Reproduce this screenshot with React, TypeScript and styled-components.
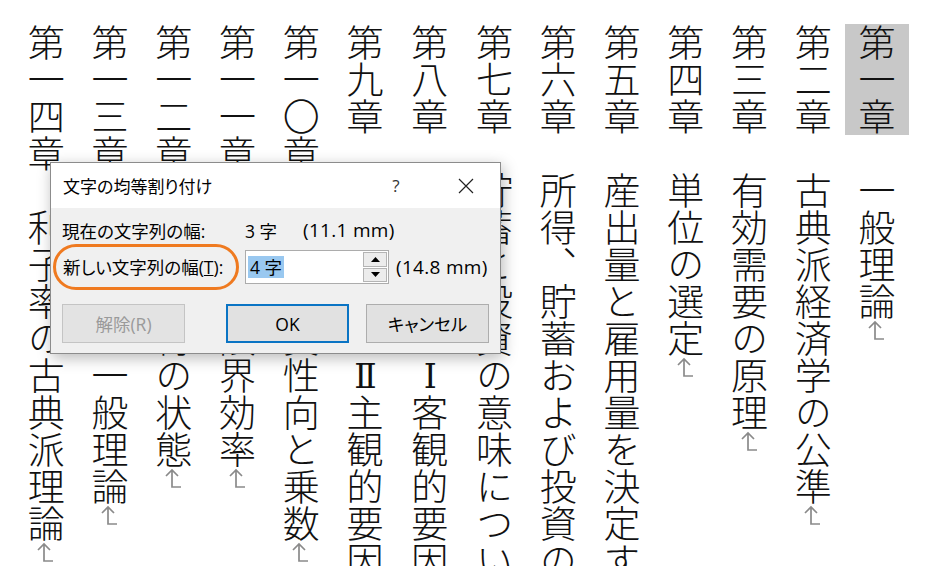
import styled, { createGlobalStyle } from 'styled-components'

const GlobalStyle = createGlobalStyle`
  html, body {
    margin: 0;
    padding: 0;
    background: #fff;
    overflow: hidden;
  }
`

interface Chapter {
  heading: string
  title: string
  numeral?: string
  rest?: string
  marked?: boolean
}

const chapters: Chapter[] = [
  { heading: '第一章', title: '一般理論', marked: true },
  { heading: '第二章', title: '古典派経済学の公準' },
  { heading: '第三章', title: '有効需要の原理' },
  { heading: '第四章', title: '単位の選定' },
  { heading: '第五章', title: '産出量と雇用量を決定するものとしての期待' },
  { heading: '第六章', title: '所得、貯蓄および投資の定義' },
  { heading: '第七章', title: '貯蓄と投資の意味についての続論' },
  { heading: '第八章', title: '消費性向　', numeral: 'Ⅰ', rest: '客観的要因' },
  { heading: '第九章', title: '消費性向　', numeral: 'Ⅱ', rest: '主観的要因' },
  { heading: '第一〇章', title: '限界消費性向と乗数' },
  { heading: '第一一章', title: '資本の限界効率' },
  { heading: '第一二章', title: '長期期待の状態' },
  { heading: '第一三章', title: '利子率の一般理論' },
  { heading: '第一四章', title: '利子率の古典派理論' },
]

function ReturnMark() {
  return (
    <MarkSvg width="20" height="22" viewBox="0 0 20 22" aria-hidden>
      <path d="M3 8 L9 2 L15 8 M9 2 V19 H18" fill="none" stroke="#8a8a8a" strokeWidth="1.7" />
    </MarkSvg>
  )
}

function SpinArrow({ up }: { up?: boolean }) {
  return (
    <svg width="9" height="5" viewBox="0 0 9 5">
      <path d={up ? 'M0 5 L4.5 0 L9 5 Z' : 'M0 0 L4.5 5 L9 0 Z'} fill="#000" />
    </svg>
  )
}

export default function App() {
  return (
    <>
      <GlobalStyle />
      <Page>
        <Doc>
          {chapters.map((c) => (
            <Para key={c.heading}>
              {c.marked ? <Selected>{c.heading}</Selected> : c.heading}
              {'　'}
              {c.title}
              {c.numeral && <Numeral>{c.numeral}</Numeral>}
              {c.rest}
              <ReturnMark />
            </Para>
          ))}
        </Doc>

        <Dialog>
          <TitleBar>
            <Title>文字の均等割り付け</Title>
            <TitleButton>?</TitleButton>
            <TitleButton $close>
              <svg width="16" height="16" viewBox="0 0 16 16">
                <path d="M1 1 L15 15 M15 1 L1 15" stroke="#222" strokeWidth="1.2" />
              </svg>
            </TitleButton>
          </TitleBar>
          <Body>
            <Row>
              <LabelCell>現在の文字列の幅:</LabelCell>
              <Count>3 字</Count>
              <Measure>(11.1 mm)</Measure>
            </Row>
            <Row $gap>
              <LabelCell>
                <Circled>
                  新しい文字列の幅(<u>T</u>):
                </Circled>
              </LabelCell>
              <SpinBox>
                <SpinText>
                  <Sel>4 字</Sel>
                </SpinText>
                <SpinButtons>
                  <SpinButton>
                    <SpinArrow up />
                  </SpinButton>
                  <SpinButton>
                    <SpinArrow />
                  </SpinButton>
                </SpinButtons>
              </SpinBox>
              <Measure $unit>(14.8 mm)</Measure>
            </Row>
            <Buttons>
              <Button $disabled>解除(R)</Button>
              <Button $default>OK</Button>
              <Button>キャンセル</Button>
            </Buttons>
          </Body>
        </Dialog>
      </Page>
    </>
  )
}

const Page = styled.div`
  position: relative;
  width: 925px;
  height: 566px;
  overflow: hidden;
  background: #fff;
  display: flex;
  justify-content: flex-end;
  padding: 24px 17px 0 0;
  box-sizing: border-box;
`

const Doc = styled.div`
  writing-mode: vertical-rl;
  height: 700px;
  font-family: 'Noto Sans CJK JP', sans-serif;
  font-weight: 300;
  font-size: 37px;
  line-height: 63.7px;
  color: #111;
`

const Para = styled.p`
  margin: 0;
  white-space: nowrap;
`

const Selected = styled.span`
  background: #c8c8c8;
  padding: 0 5px;
`

const Numeral = styled.span`
  font-family: 'DejaVu Serif', 'Noto Sans CJK JP', serif;
  font-size: 33px;
  text-orientation: upright;
  display: inline-block;
  inline-size: 37px;
  text-align: center;
`

const MarkSvg = styled.svg`
  display: inline-block;
  vertical-align: middle;
  margin-right: 22px;
`

const Dialog = styled.div`
  position: absolute;
  left: 50px;
  top: 162px;
  width: 451px;
  height: 192px;
  box-sizing: border-box;
  border: 1px solid #8c8c8c;
  background: #f0f0f0;
  box-shadow: 2px 4px 14px rgba(0, 0, 0, 0.28);
  font-family: 'Open Sans', 'Noto Sans CJK JP', sans-serif;
  font-feature-settings: 'palt';
  font-size: 17.5px;
  color: #000;
  display: flex;
  flex-direction: column;
`

const TitleBar = styled.div`
  height: 45px;
  background: #fff;
  display: flex;
  align-items: center;
  padding: 0 11px 0 12px;
`

const Title = styled.div`
  flex: 1;
  font-size: 17px;
`

const TitleButton = styled.div<{ $close?: boolean }>`
  width: 46px;
  height: 45px;
  display: flex;
  align-items: center;
  justify-content: center;
  margin-left: ${({ $close }) => ($close ? '24px' : '0')};
  color: #333;
  font-size: 17px;
`

const Body = styled.div`
  flex: 1;
  padding: 11px 11px 0 11px;
  display: flex;
  flex-direction: column;
`

const Row = styled.div<{ $gap?: boolean }>`
  display: flex;
  align-items: center;
  height: ${({ $gap }) => ($gap ? '34px' : '22px')};
  margin-top: ${({ $gap }) => ($gap ? '9px' : '0')};
`

const LabelCell = styled.div`
  width: 183px;
  flex-shrink: 0;
`

const Count = styled.span`
  width: 58px;
`

const Measure = styled.span<{ $unit?: boolean }>`
  font-size: 19px;
  letter-spacing: 0.3px;
  margin-left: ${({ $unit }) => ($unit ? '7px' : '0')};
`

const Circled = styled.span`
  display: inline-block;
  line-height: 28px;
  border-radius: 15px;
  outline: 3.5px solid #ef7a20;
  outline-offset: 6px;
  padding: 0 7px 0 1px;
`

const SpinBox = styled.div`
  width: 144px;
  height: 34px;
  box-sizing: border-box;
  border: 1px solid #acacac;
  background: #fff;
  display: flex;
  align-items: stretch;
`

const SpinText = styled.div`
  flex: 1;
  display: flex;
  align-items: center;
  padding-left: 2px;
`

const Sel = styled.span`
  background: #99c8f0;
  padding: 0 2px;
  line-height: 22px;
`

const SpinButtons = styled.div`
  width: 24px;
  margin: 1px 1px 1px 0;
  display: flex;
  flex-direction: column;
  gap: 1px;
`

const SpinButton = styled.div`
  flex: 1;
  background: #ececec;
  border: 1px solid #b4b4b4;
  display: flex;
  align-items: center;
  justify-content: center;
`

const Buttons = styled.div`
  display: flex;
  margin-top: 20px;
`

const Button = styled.div<{ $disabled?: boolean; $default?: boolean }>`
  width: 123px;
  height: 39px;
  box-sizing: border-box;
  display: flex;
  align-items: center;
  justify-content: center;
  background: ${({ $disabled }) => ($disabled ? '#e3e3e3' : '#e1e1e1')};
  border: ${({ $default, $disabled }) =>
    $default ? '2px solid #0a74c4' : $disabled ? '1px solid #c4c4c4' : '1px solid #adadad'};
  color: ${({ $disabled }) => ($disabled ? '#9a9a9a' : '#000')};
  margin-left: ${({ $default, $disabled }) => ($disabled ? '0' : $default ? '41px' : '17px')};
`
